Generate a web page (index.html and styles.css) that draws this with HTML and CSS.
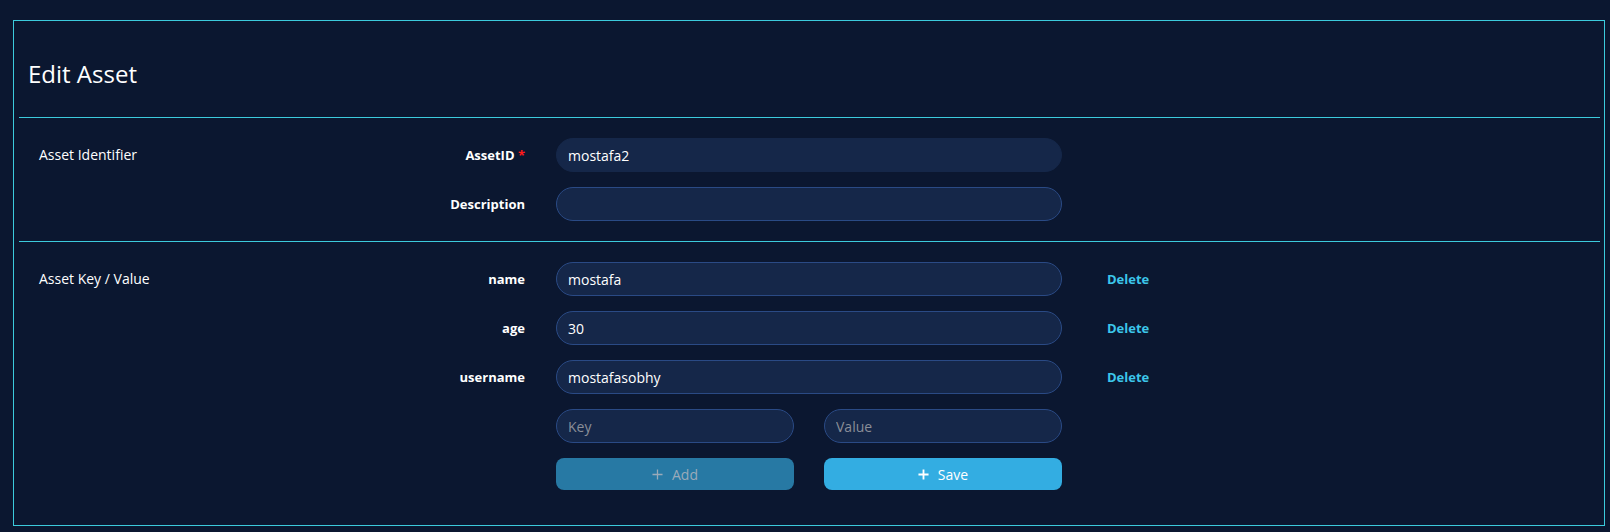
FILE: index.html
```html
<!DOCTYPE html>
<html lang="en">
<head>
  <meta charset="UTF-8" />
  <meta name="viewport" content="width=device-width, initial-scale=1" />
  <title>Edit Asset</title>
  <link rel="stylesheet" href="styles.css">
</head>
<body>
  <div class="card">
    <div class="card-header">
      <h2 class="card-title">Edit Asset</h2>
    </div>

    <!-- Identifier -->
    <div class="section">
      <div class="section-title">Asset Identifier</div>
      <div class="fields">
        <div class="field-row">
          <label class="field-label">AssetID <span class="required">*</span></label>
          <input class="field-input readonly" type="text" value="mostafa2" />
        </div>
        <div class="field-row">
          <label class="field-label">Description</label>
          <input class="field-input" type="text" value="" />
        </div>
      </div>
    </div>

    <!-- Key / value pairs -->
    <div class="section last">
      <div class="section-title">Asset Key / Value</div>
      <div class="fields">
        <div class="field-row">
          <label class="field-label">name</label>
          <input class="field-input" type="text" value="mostafa" />
          <a class="delete-link" href="#">Delete</a>
        </div>
        <div class="field-row">
          <label class="field-label">age</label>
          <input class="field-input" type="text" value="30" />
          <a class="delete-link" href="#">Delete</a>
        </div>
        <div class="field-row">
          <label class="field-label">username</label>
          <input class="field-input" type="text" value="mostafasobhy" />
          <a class="delete-link" href="#">Delete</a>
        </div>
        <div class="field-row">
          <span></span>
          <div class="pair">
            <input class="field-input" type="text" placeholder="Key" />
            <input class="field-input" type="text" placeholder="Value" />
          </div>
        </div>
        <div class="field-row">
          <span></span>
          <div class="pair">
            <button class="btn btn-add" type="button">
              <svg class="plus" viewBox="0 0 12 12" width="11" height="11"><path d="M6 0.5v11M0.5 6h11" /></svg>
              Add
            </button>
            <button class="btn btn-save" type="button">
              <svg class="plus" viewBox="0 0 12 12" width="11" height="11"><path d="M6 0.5v11M0.5 6h11" /></svg>
              Save
            </button>
          </div>
        </div>
      </div>
    </div>
  </div>
</body>
</html>
```

FILE: styles.css
```css
* {
  box-sizing: border-box;
}
body, html {
  margin: 0;
  padding: 0;
  height: 532px;
  overflow: hidden;
  background: #0b1730;
  font-family: 'Open Sans', 'Noto Sans', Arial, sans-serif;
  font-size: 14px;
  color: #ffffff;
}
.card {
  margin: 20px 5px 6px 13px;
  padding: 0 4px 15px 5px;
  border: 1px solid #3ccbdc;
}
.card-header {
  padding: 37px 0 27px 9px;
  border-bottom: 1px solid #3ccbdc;
}
.card-title {
  margin: 0;
  font-size: 24px;
  font-weight: 400;
  line-height: 32px;
}
.section {
  display: flex;
  padding: 20px;
  border-bottom: 1px solid #3ccbdc;
}
.section.last {
  border-bottom: none;
}
.section-title {
  width: 300px;
  flex-shrink: 0;
  line-height: 34px;
}
.fields {
  display: flex;
  flex-direction: column;
  gap: 15px;
}
.field-row {
  display: grid;
  grid-template-columns: 186px 506px auto;
  column-gap: 31px;
  align-items: center;
}
.field-label {
  text-align: right;
  font-size: 13px;
  font-weight: 700;
}
.required {
  color: #ff1a1a;
}
.field-input {
  width: 100%;
  height: 34px;
  padding: 0 11px;
  border: 1px solid #2a4a85;
  border-radius: 17px;
  background: #152749;
  color: #ffffff;
  font-family: inherit;
  font-size: 14px;
  outline: none;
}
.field-input.readonly {
  border-color: #152749;
}
.field-input::placeholder {
  color: #8a8e98;
}
.delete-link {
  margin-left: 14px;
  color: #3cc6ea;
  font-size: 13px;
  font-weight: 700;
  text-decoration: none;
}
.pair {
  display: grid;
  grid-template-columns: 1fr 1fr;
  column-gap: 30px;
}
.btn {
  display: flex;
  align-items: center;
  justify-content: center;
  gap: 9px;
  height: 32px;
  border: none;
  border-radius: 8px;
  font-family: inherit;
  font-size: 14px;
  cursor: pointer;
}
.btn .plus {
  fill: none;
  stroke: currentColor;
  stroke-width: 1.4;
}
.btn-add {
  background: #2779a4;
  color: #9aaab9;
}
.btn-save {
  background: #33ade2;
  color: #ffffff;
}
.btn-save .plus {
  stroke-width: 2;
}
```
